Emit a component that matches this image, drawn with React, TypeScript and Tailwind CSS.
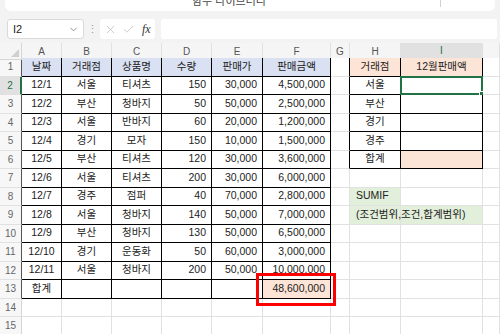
import { Check, ChevronDown, X } from "lucide-react";

const GRID =
  "grid grid-cols-[22px_40px_50px_50px_50px_51px_68px_19px_51px_82px_1fr]";
const letters = ["A", "B", "C", "D", "E", "F", "G", "H", "I", ""];

const rows: string[][] = [
  ["날짜", "거래점", "상품명", "수량", "판매가", "판매금액", "", "거래점", "12월판매액"],
  ["12/1", "서울", "티셔츠", "150", "30,000", "4,500,000", "", "서울", ""],
  ["12/2", "부산", "청바지", "50", "50,000", "2,500,000", "", "부산", ""],
  ["12/3", "서울", "반바지", "60", "20,000", "1,200,000", "", "경기", ""],
  ["12/4", "경기", "모자", "150", "10,000", "1,500,000", "", "경주", ""],
  ["12/5", "부산", "티셔츠", "120", "30,000", "3,600,000", "", "합계", ""],
  ["12/6", "서울", "티셔츠", "200", "30,000", "6,000,000", "", "", ""],
  ["12/7", "경주", "점퍼", "40", "70,000", "2,800,000", "", "SUMIF", ""],
  ["12/8", "서울", "청바지", "140", "50,000", "7,000,000", "", "(조건범위,조건,합계범위)", ""],
  ["12/9", "부산", "청바지", "130", "50,000", "6,500,000", "", "", ""],
  ["12/10", "경기", "운동화", "50", "60,000", "3,000,000", "", "", ""],
  ["12/11", "서울", "청바지", "200", "50,000", "10,000,000", "", "", ""],
  ["합계", "", "", "", "", "48,600,000", "", "", ""],
  [],
  [],
];

const Cell = ({ r, c, text }: { r: number; c: number; text: string }) => {
  const inTable =
    (r >= 1 && r <= 13 && c <= 5) || (r >= 1 && r <= 6 && (c === 7 || c === 8));
  const br =
    inTable || (c === 6 && r >= 1 && r <= 6) ? "border-r-black" : "border-r-[#e1e1e1]";
  const bb = inTable ? "border-b-black" : "border-b-[#e1e1e1]";

  let bg = "bg-white";
  if (r === 1 && c <= 5) bg = "bg-[#d9e1f2]";
  if (r === 1 && (c === 7 || c === 8)) bg = "bg-[#fce4d6]";
  if (r === 6 && c === 8) bg = "bg-[#fce4d6]";
  if (r === 13 && c === 5) bg = "bg-[#fce4d6]";
  if (r === 8 && c === 7) bg = "bg-[#e2efda]";
  if (r === 9 && (c === 7 || c === 8)) bg = "bg-[#e2efda]";

  let al = "justify-center";
  if (r >= 2 && r <= 13 && c >= 3 && c <= 5) al = "justify-end pr-[5px]";
  if ((r === 8 || r === 9) && c === 7) al = "justify-start pl-[6px]";

  return (
    <div
      className={`relative flex items-center h-[18.5px] border-r border-b ${br} ${bb} ${bg} ${al}`}
    >
      {text && <span className="relative z-10 whitespace-nowrap">{text}</span>}
      {r === 2 && c === 8 && (
        <div className="absolute inset-[-1px] border-2 border-[#217346]">
          <div className="absolute right-[-4px] bottom-[-4px] w-[6px] h-[6px] bg-[#217346] border border-white" />
        </div>
      )}
      {r === 13 && c === 5 && (
        <div className="absolute left-[-7px] top-[-7px] right-[-6px] bottom-[-8px] border-[3px] border-[#ff0000] z-20" />
      )}
    </div>
  );
};

export default function App() {
  return (
    <div className="w-[500px] h-[334px] overflow-hidden bg-white text-[#222] text-[10.5px] font-['Liberation_Sans','Noto_Sans_CJK_KR',sans-serif]">
      {/* ribbon + formula bar */}
      <div className="h-[43px] bg-[#f3f3f3] pt-0">
        <div className="mx-[5px] h-[11px] bg-white rounded-b-[6px] overflow-hidden flex">
          <span className="ml-[187px] -mt-[4px] text-[11px] text-[#444] leading-none">
            함수 라이브러리
          </span>
          <div className="ml-auto mr-[54px] w-px h-[7px] bg-[#d0d0d0]" />
        </div>
        <div className="flex items-center h-[20px] mt-[8px] pl-[7px] pr-[3px]">
          <div className="w-[77px] h-[20px] bg-white border border-[#dadada] rounded-[3px] flex items-center justify-between pl-[5px] pr-[4px]">
            <span className="text-[11px] text-[#222]">I2</span>
            <ChevronDown size={11} strokeWidth={1.5} className="text-[#666]" />
          </div>
          <span className="w-[16px] text-center text-[#999] text-[11px]">⋮</span>
          <div className="w-[55px] h-[20px] bg-white rounded-[3px] flex items-center pl-[4px] gap-[5px]">
            <X size={13} strokeWidth={1.2} className="text-[#b0b0b0]" />
            <Check size={13} strokeWidth={1.2} className="text-[#b0b0b0]" />
            <span className="ml-[2px] italic font-['Liberation_Serif',serif] text-[12px] text-[#333]">
              fx
            </span>
          </div>
          <div className="ml-[6px] flex-1 h-[20px] bg-white rounded-[3px]" />
        </div>
      </div>

      {/* column headers */}
      <div className={`${GRID} h-[15px] bg-[#f5f5f5] text-[10px] text-[#555]`}>
        <div className="relative border-r border-b border-[#d5d5d5]">
          <div className="absolute right-[2px] bottom-[2px] w-0 h-0 border-l-[8px] border-l-transparent border-b-[8px] border-b-[#d0d0d0]" />
        </div>
        {letters.map((l, i) => {
          const bb =
            i === 8
              ? "border-b-2 border-b-[#217346] bg-[#e1e1e1] text-[#217346]"
              : i <= 5 || i === 7
              ? "border-b border-b-[#9a9a9a]"
              : "border-b border-b-[#d5d5d5]";
          return (
            <div
              key={i}
              className={`flex items-center justify-center border-r border-r-[#e0e0e0] ${bb}`}
            >
              {l}
            </div>
          );
        })}
      </div>

      {/* rows */}
      {rows.map((row, ri) => {
        const r = ri + 1;
        const hdr =
          r === 2
            ? "bg-[#e1e1e1] text-[#217346] border-r-2 border-r-[#217346]"
            : r <= 13
            ? "bg-[#f7f7f7] text-[#666] border-r border-r-[#555]"
            : "bg-[#f7f7f7] text-[#666] border-r border-r-[#d5d5d5]";
        return (
          <div key={r} className={GRID}>
            <div
              className={`flex items-center justify-center h-[18.5px] text-[10px] border-b border-b-[#e1e1e1] ${hdr}`}
            >
              {r}
            </div>
            {letters.map((_, c) => (
              <Cell key={c} r={r} c={c} text={row[c] ?? ""} />
            ))}
          </div>
        );
      })}
    </div>
  );
}
